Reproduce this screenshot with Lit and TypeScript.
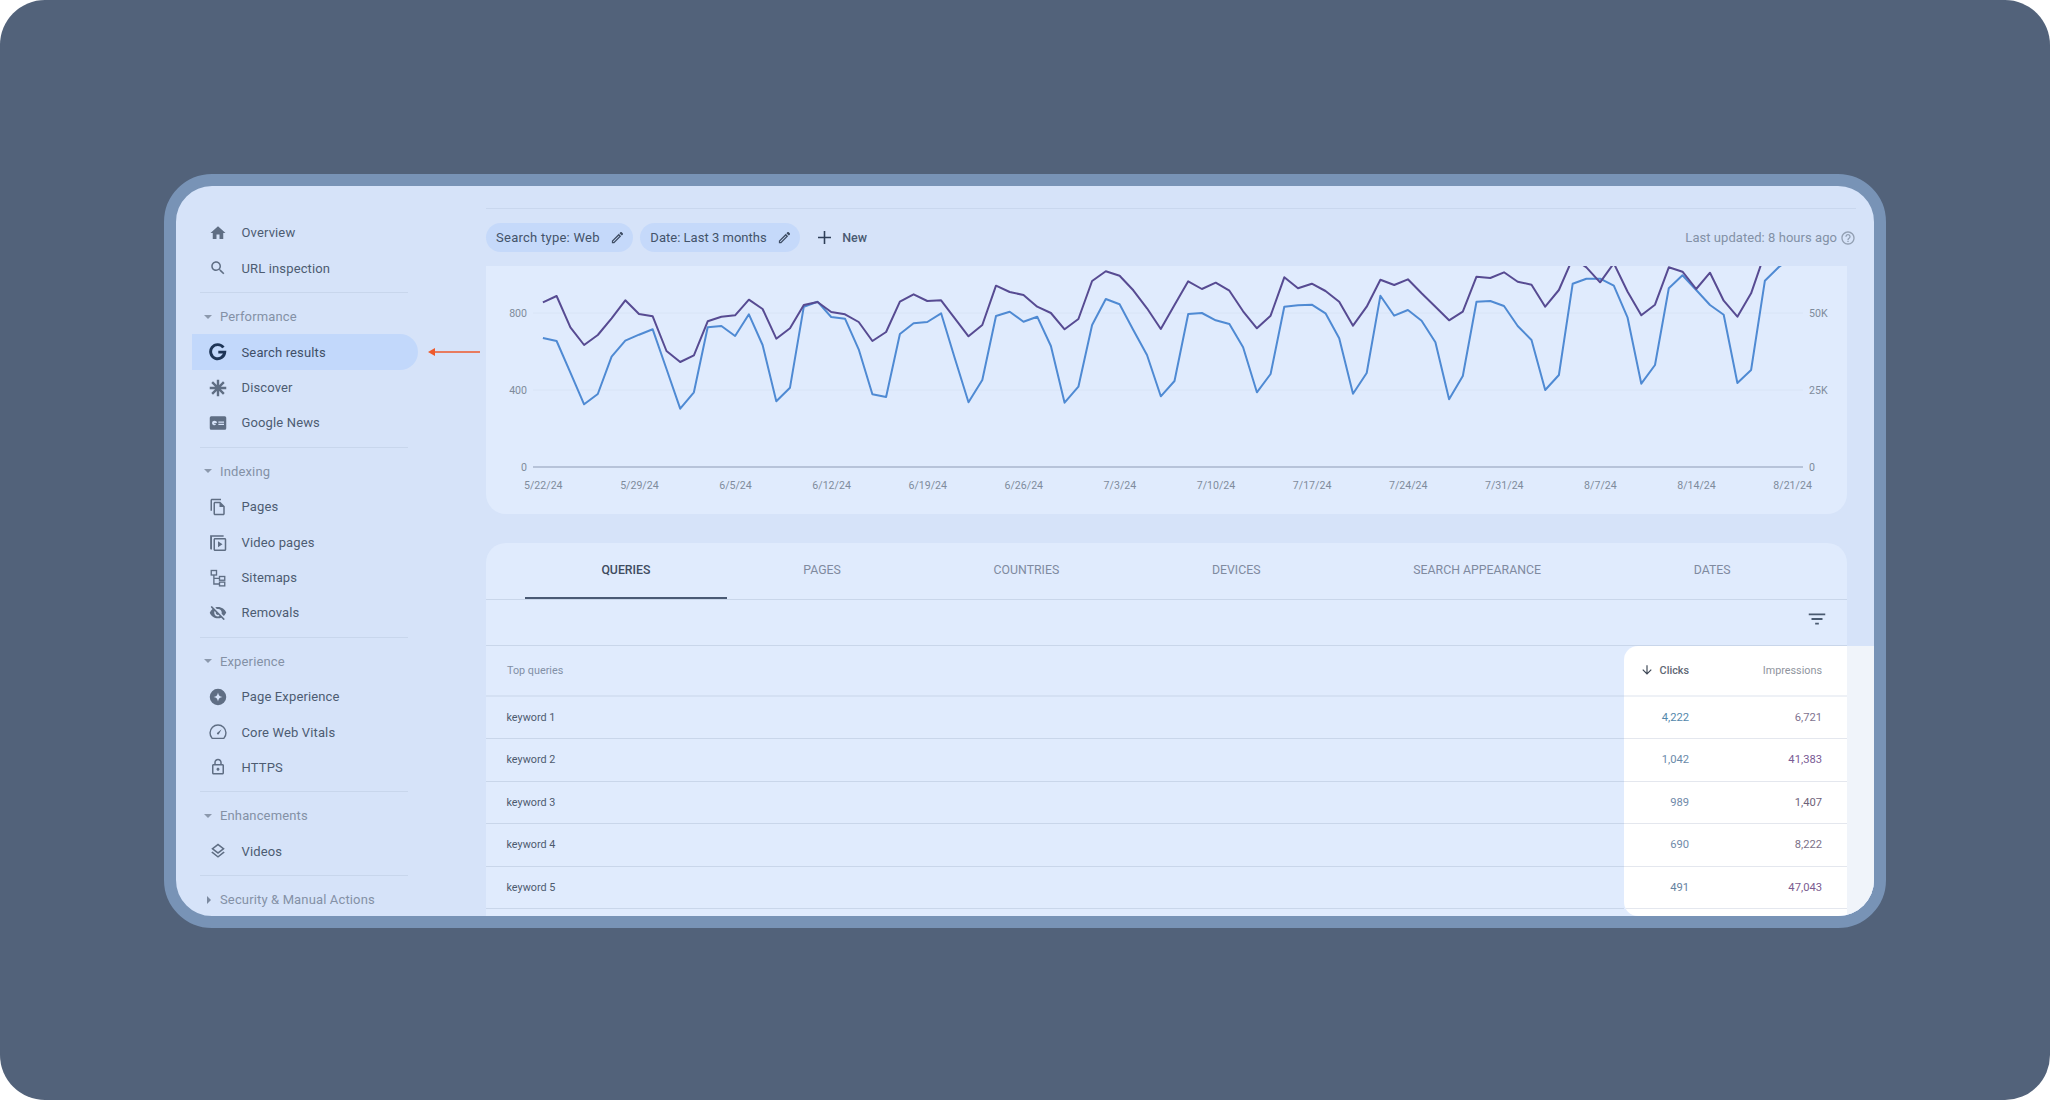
import { LitElement, html, css, svg } from "lit";
import { customElement } from "lit/decorators.js";

const I: Record<string, any> = {
  home: svg`<path d="M10 20v-6h4v6h5v-8h3L12 3 2 12h3v8z"/>`,
  search: svg`<path d="M15.5 14h-.79l-.28-.27C15.41 12.59 16 11.11 16 9.5 16 5.91 13.09 3 9.5 3S3 5.91 3 9.5 5.91 16 9.5 16c1.61 0 3.09-.59 4.23-1.57l.27.28v.79l5 4.99L20.49 19l-4.99-5zm-6 0C7.01 14 5 11.99 5 9.5S7.01 5 9.5 5 14 7.01 14 9.5 11.99 14 9.5 14z"/>`,
  g: svg`<path d="M19.2 6A9.4 9.4 0 1 0 21 12.2H12.4" fill="none" stroke="#1e3557" stroke-width="3.9"/>`,
  discover: svg`<g stroke="currentColor" stroke-width="3.2" stroke-linecap="butt"><path d="M12 1v22M1 12h22M4.2 4.2l15.6 15.6M19.8 4.2L4.2 19.8"/></g>`,
  news: svg`<path fill-rule="evenodd" d="M3 3h18a2 2 0 0 1 2 2v14a2 2 0 0 1-2 2H3a2 2 0 0 1-2-2V5a2 2 0 0 1 2-2zM7 9a3 3 0 1 0 2.8 4.1H7v-1.2h3.6V12A3.6 3 0 0 0 7 9zM12.5 10v1.5H20V10zM12.5 13v1.5H20V13z"/>`,
  pages: svg`<path d="M16 1H4c-1.1 0-2 .9-2 2v14h2V3h12V1zm-1 4H8c-1.1 0-1.99.9-1.99 2L6 21c0 1.1.89 2 1.99 2H19c1.1 0 2-.9 2-2V11l-6-6zM8 21V7h6v5h5v9H8z"/>`,
  video: svg`<path d="M1.5 3v17.5c0 .8.7 1.5 1.5 1.5h1V5h15.5V3H3c-.8 0-1.5 0-1.5 0z"/><path d="M8 6.5h13c1.1 0 2 .9 2 2V22c0 1.1-.9 2-2 2H8c-1.1 0-2-.9-2-2V8.5c0-1.1.9-2 2-2zm0 2V22h13V8.5H8zM12 11v8l6-4z"/>`,
  sitemap: svg`<g fill="none" stroke="currentColor" stroke-width="1.8"><rect x="3" y="2" width="7" height="6"/><rect x="14" y="10" width="7" height="5"/><rect x="14" y="17.5" width="7" height="5"/><path d="M6.5 8v12H14M6.5 12.5H14"/></g>`,
  removal: svg`<path d="M12 6.5c2.76 0 5 2.24 5 5 0 .51-.1 1-.24 1.46l3.06 3.06c1.39-1.23 2.49-2.77 3.18-4.53C21.27 7.11 17 4 12 4c-1.27 0-2.49.2-3.64.57l2.17 2.17c.47-.14.96-.24 1.47-.24zM2.71 3.16c-.39.39-.39 1.02 0 1.41l1.97 1.97C3.06 7.83 1.77 9.53 1 11.5 2.73 15.89 7 19 12 19c1.52 0 2.97-.3 4.31-.82l2.72 2.72c.39.39 1.02.39 1.41 0 .39-.39.39-1.02 0-1.41L4.13 3.16c-.39-.39-1.03-.39-1.42 0zM12 16.5c-2.76 0-5-2.24-5-5 0-.77.18-1.5.49-2.14l1.57 1.57c-.03.18-.06.37-.06.57 0 1.66 1.34 3 3 3 .2 0 .38-.03.57-.07L14.14 16c-.65.32-1.37.5-2.14.5z"/>`,
  exp: svg`<path fill-rule="evenodd" d="M12 1a11 11 0 1 1 0 22 11 11 0 0 1 0-22zM12 6c-.7 3.9-2.1 5.3-6 6 3.9.7 5.3 2.1 6 6 .7-3.9 2.1-5.3 6-6-3.9-.7-5.3-2.1-6-6z"/>`,
  vitals: svg`<path d="M4.2 20.5a10.6 10.6 0 1 1 15.6 0H4.2z" fill="none" stroke="currentColor" stroke-width="1.9" stroke-linejoin="round"/><path d="M10.6 13.2l6.2-5-3.8 6.8a1.6 1.6 0 0 1-2.4-1.8z"/>`,
  lock: svg`<path d="M18 8h-1V6c0-2.76-2.24-5-5-5S7 3.24 7 6v2H6c-1.1 0-2 .9-2 2v10c0 1.1.9 2 2 2h12c1.1 0 2-.9 2-2V10c0-1.1-.9-2-2-2zM9 6c0-1.66 1.34-3 3-3s3 1.34 3 3v2H9V6zm9 14H6V10h12v10zm-6-3c1.1 0 2-.9 2-2s-.9-2-2-2-2 .9-2 2 .9 2 2 2z"/>`,
  layers: svg`<path d="M11.99 18.54l-7.37-5.73L3 14.07l9 7 9-7-1.63-1.27zM12 16l7.36-5.73L21 9l-9-7-9 7 1.63 1.27L12 16zm0-11.47L17.74 9 12 13.47 6.26 9 12 4.53z"/>`,
  edit: svg`<path d="M3 17.25V21h3.75L17.81 9.94l-3.75-3.75L3 17.25zM5.92 19H5v-.92l9.06-9.06.92.92L5.92 19zM20.71 5.63l-2.34-2.34c-.2-.2-.45-.29-.71-.29s-.51.1-.7.29l-1.83 1.83 3.75 3.75 1.83-1.83c.39-.39.39-1.02 0-1.41z"/>`,
  help: svg`<path d="M11 18h2v-2h-2v2zm1-16C6.48 2 2 6.48 2 12s4.48 10 10 10 10-4.48 10-10S17.52 2 12 2zm0 18c-4.41 0-8-3.59-8-8s3.59-8 8-8 8 3.59 8 8-3.59 8-8 8zm0-14c-2.21 0-4 1.79-4 4h2c0-1.1.9-2 2-2s2 .9 2 2c0 2-3 1.75-3 5h2c0-2.25 3-2.5 3-5 0-2.21-1.79-4-4-4z"/>`,
  filter: svg`<path d="M10 18h4v-2h-4v2zM3 6v2h18V6H3zm3 7h12v-2H6v2z"/>`,
  down: svg`<path d="M20 12l-1.41-1.41L13 16.17V4h-2v12.17l-5.58-5.59L4 12l8 8 8-8z"/>`,
};

const icon = (n: string, cls = "ic") =>
  html`<svg class=${cls} viewBox="0 0 24 24" fill="currentColor">${I[n]}</svg>`;

type Item = { t: string; i: string; active?: boolean };
type Sec = { label?: string; open?: boolean; items: Item[] };

const NAV: Sec[] = [
  { items: [{ t: "Overview", i: "home" }, { t: "URL inspection", i: "search" }] },
  { label: "Performance", open: true, items: [{ t: "Search results", i: "g", active: true }, { t: "Discover", i: "discover" }, { t: "Google News", i: "news" }] },
  { label: "Indexing", open: true, items: [{ t: "Pages", i: "pages" }, { t: "Video pages", i: "video" }, { t: "Sitemaps", i: "sitemap" }, { t: "Removals", i: "removal" }] },
  { label: "Experience", open: true, items: [{ t: "Page Experience", i: "exp" }, { t: "Core Web Vitals", i: "vitals" }, { t: "HTTPS", i: "lock" }] },
  { label: "Enhancements", open: true, items: [{ t: "Videos", i: "layers" }] },
  { label: "Security & Manual Actions", open: false, items: [] },
];

const DARK = [337,318,412,465,435,385,331,372,379,483,516,496,394,380,376,329,357,446,415,345,336,366,373,396,453,426,335,313,333,331,385,439,405,287,306,315,350,369,418,387,273,244,257,301,355,417,345,274,297,278,302,364,415,377,262,295,281,303,335,407,350,269,285,268,310,350,391,365,260,264,247,275,284,350,300,205,232,277,220,305,376,344,232,245,297,248,332,380,310,190,110,90];
const LIGHT = [444,453,548,643,612,500,452,434,418,537,656,607,412,408,438,373,465,634,593,350,335,381,386,478,613,621,432,400,396,370,505,637,570,378,365,395,380,468,638,590,405,327,343,420,495,619,573,372,369,391,402,472,607,552,350,346,344,370,445,611,549,317,377,360,392,457,628,558,335,333,348,408,450,600,555,281,266,266,287,383,581,525,295,256,300,345,374,579,540,272,232,200];
const pts = (a: number[]) => a.map((v, i) => `${(56.9 + 13.73 * i).toFixed(1)},${(v / 3 - 76).toFixed(1)}`).join(" ");
const DATES = ["5/22/24","5/29/24","6/5/24","6/12/24","6/19/24","6/26/24","7/3/24","7/10/24","7/17/24","7/24/24","7/31/24","8/7/24","8/14/24","8/21/24"];
const TABS = ["QUERIES","PAGES","COUNTRIES","DEVICES","SEARCH APPEARANCE","DATES"];
const ROWS = [
  ["keyword 1","4,222","6,721","#5488ab","#7f7390"],
  ["keyword 2","1,042","41,383","#6b8aa9","#7b5b95"],
  ["keyword 3","989","1,407","#708aa9","#6f6279"],
  ["keyword 4","690","8,222","#708aa9","#7d7288"],
  ["keyword 5","491","47,043","#66829f","#7b5b90"],
];

@customElement("app-root")
export class AppRoot extends LitElement {
  static styles = css`
    :host { display: block; width: 2050px; height: 1100px; background: #fff; font-family: Roboto, "Liberation Sans", sans-serif; }
    .page { width: 2050px; height: 1100px; box-sizing: border-box; padding-top: 174px; background: #52627a; border-radius: 45px; display: flex; justify-content: center; align-items: flex-start; }
    .frame { width: 1722px; height: 754px; box-sizing: border-box; border: 12px solid #7893b6; border-radius: 48px; background: #d6e3f9; display: flex; overflow: hidden; }
    .side { width: 310px; flex: none; padding: 29.3px 0 0 16px; box-sizing: border-box; }
    .item, .sec { height: 35.4px; display: flex; align-items: center; position: relative; }
    .item { padding-left: 17px; width: 226px; box-sizing: border-box; font-size: 13px; letter-spacing: .14px; color: #4d5c72; }
    .item.active { background: #c2d8fb; border-radius: 0 18px 18px 0; color: #3f4f68; }
    .ic { width: 18px; height: 18px; flex: none; margin-right: 14.5px; color: #5f6e84; }
    .sec { font-size: 13px; letter-spacing: .14px; color: #8491a6; }
    .caret { width: 0; height: 0; margin: 0 8px 0 12px; border-left: 4px solid transparent; border-right: 4px solid transparent; border-top: 4px solid #8c99ad; }
    .caret.closed { margin: 0 9px 0 15px; border: 0; border-top: 4px solid transparent; border-bottom: 4px solid transparent; border-left: 4px solid #7c8aa0; }
    .div { height: 1px; margin: 6px 0 6px 8px; width: 208px; background: #c8d6ec; }
    .arrow { position: absolute; left: 236px; top: 13.5px; width: 52px; height: 8px; }
    .main { flex: 1; min-width: 0; padding-top: 22px; display: flex; flex-direction: column; }
    .rule { height: 1px; background: #c9d7ee; margin-right: 18px; }
    .filters { margin: 14px 18px 14px 0; height: 29px; display: flex; align-items: center; }
    .chip { height: 29px; border-radius: 15px; background: #c5d9fa; display: flex; align-items: center; padding: 0 8px 0 10px; margin-right: 7.5px; font-size: 13px; letter-spacing: .26px; color: #43536a; box-sizing: border-box; }
    .chip.tight { letter-spacing: .02px; }
    .chip .t { margin-right: 10px; }
    .chip svg { width: 15px; height: 15px; color: #3e4d64; }
    .new { display: flex; align-items: center; margin-left: 11px; font-size: 12.5px; font-weight: 500; color: #4a5a72; }
    .plus { width: 13px; height: 13px; margin-right: 11px; color: #2f3f58; }
    .upd { margin-left: auto; display: flex; align-items: center; font-size: 13px; letter-spacing: .05px; color: #8391a6; }
    .upd svg { width: 16px; height: 16px; margin-left: 3px; color: #93a0b3; }
    .chart { height: 248px; margin-right: 27px; flex: none; background: #e0ebfd; border-radius: 0 0 20px 20px; overflow: hidden; }
    .chart svg { display: block; width: 1361px; height: 248px; }
    .lbl { font: 10.6px Roboto, sans-serif; fill: #7f8b9c; }
    .tw { margin-top: 29px; flex: 1; min-height: 0; display: flex; flex-direction: column; }
    .head { margin-right: 27px; background: #e0ebfd; border-radius: 20px 20px 0 0; }
    .tabs { height: 56px; border-bottom: 1px solid #c9d6ea; display: flex; padding-left: 39px; }
    .tab { padding: 0 76.4px 2.4px; height: 56px; box-sizing: border-box; display: flex; align-items: center; font-size: 12.3px; color: #7f8a9f; }
    .tab.on { color: #3f4c60; font-weight: 500; border-bottom: 2.4px solid #4a5a74; padding-bottom: 0; }
    .tool { border-bottom: 1px solid #c9d6ea; display: flex; align-items: flex-start; justify-content: flex-end; padding: 8px 19px 0 0; height: 37px; }
    .tool svg { width: 22px; height: 22px; color: #4a5a70; }
    .grid { flex: 1; min-height: 0; display: flex; background: #e0ebfd; overflow: hidden; }
    .q { flex: 1; min-width: 0; }
    .m { width: 250px; flex: none; background: linear-gradient(90deg, #fff 223px, #f0f4fa 223px); border-radius: 14px 0 0 14px; overflow: hidden; }
    .r { height: 42.5px; box-sizing: border-box; display: flex; align-items: center; }
    .hr { height: 50.7px; }
    .q .r { border-bottom: 1px solid #c9d6ea; padding-left: 20.5px; font-size: 10.8px; color: #4d5a6e; }
    .q .hr { border-bottom: 2px solid #d4e0f3; font-size: 10.8px; color: #8290a6; padding-left: 21px; }
    .m .r { width: 223px; border-bottom: 1px solid #e4e7ee; font-size: 11.2px; display: grid; grid-template-columns: 65px 133px; }
    .m .hr { border-bottom: 2px solid #eef1f6; font-size: 10.8px; }
    .m .r > div { text-align: right; }
    .clk { display: flex; align-items: center; justify-content: flex-end; font-weight: 500; color: #5f6975; }
    .clk svg { width: 14px; height: 14px; margin-right: 6px; color: #3c4654; }
    .imp { color: #90959e; }
  `;

  render() {
    return html`<div class="page"><div class="frame">
      <nav class="side">
        ${NAV.map((s, n) => html`
          ${n ? html`<div class="div"></div>` : ""}
          ${s.label ? html`<div class="sec"><span class=${s.open ? "caret" : "caret closed"}></span>${s.label}</div>` : ""}
          ${s.items.map((it) => html`<div class=${it.active ? "item active" : "item"}>
            ${icon(it.i)}<span>${it.t}</span>
            ${it.active ? html`<svg class="arrow" viewBox="0 0 52 8"><path d="M0 4l7-4v3.2h45v1.6H7V8z" fill="#ee5a2c"/></svg>` : ""}
          </div>`)}
        `)}
      </nav>
      <main class="main">
        <div class="rule"></div>
        <div class="filters">
          <div class="chip"><span class="t">Search type: Web</span>${icon("edit", "e")}</div>
          <div class="chip tight"><span class="t">Date: Last 3 months</span>${icon("edit", "e")}</div>
          <div class="new"><svg class="plus" viewBox="0 0 14 14"><path d="M7 0v14M0 7h14" stroke="currentColor" stroke-width="1.7"/></svg>New</div>
          <div class="upd">Last updated: 8 hours ago${icon("help", "h")}</div>
        </div>
        <section class="chart">
          <svg viewBox="0 0 1361 248">
            <path d="M47 47H1317M47 124H1317" stroke="#d8e4f6" stroke-width="1" fill="none"/>
            <path d="M47 201H1317" stroke="#aab6cc" stroke-width="1.4" fill="none"/>
            <polyline points=${pts(LIGHT)} fill="none" stroke="#4f8ad3" stroke-width="2" stroke-linejoin="round"/>
            <polyline points=${pts(DARK)} fill="none" stroke="#574b92" stroke-width="2" stroke-linejoin="round"/>
            ${[["800", 51], ["400", 128], ["0", 205]].map(([t, y]) => svg`<text class="lbl" x="41" y=${y} text-anchor="end">${t}</text>`)}
            ${[["50K", 51], ["25K", 128], ["0", 205]].map(([t, y]) => svg`<text class="lbl" x="1323" y=${y}>${t}</text>`)}
            ${DATES.map((d, i) => svg`<text class="lbl" x=${57.3 + 96.1 * i} y="223" text-anchor="middle">${d}</text>`)}
          </svg>
        </section>
        <section class="tw">
          <div class="head">
            <div class="tabs">${TABS.map((t, i) => html`<div class=${i ? "tab" : "tab on"}>${t}</div>`)}</div>
            <div class="tool">${icon("filter", "f")}</div>
          </div>
          <div class="grid">
            <div class="q">
              <div class="r hr">Top queries</div>
              ${ROWS.map((r) => html`<div class="r">${r[0]}</div>`)}
              <div class="r"></div>
            </div>
            <div class="m">
              <div class="r hr"><div class="clk">${icon("down", "d")}Clicks</div><div class="imp">Impressions</div></div>
              ${ROWS.map((r) => html`<div class="r"><div style="color:${r[3]}">${r[1]}</div><div style="color:${r[4]}">${r[2]}</div></div>`)}
              <div class="r"></div>
            </div>
          </div>
        </section>
      </main>
    </div></div>`;
  }
}
